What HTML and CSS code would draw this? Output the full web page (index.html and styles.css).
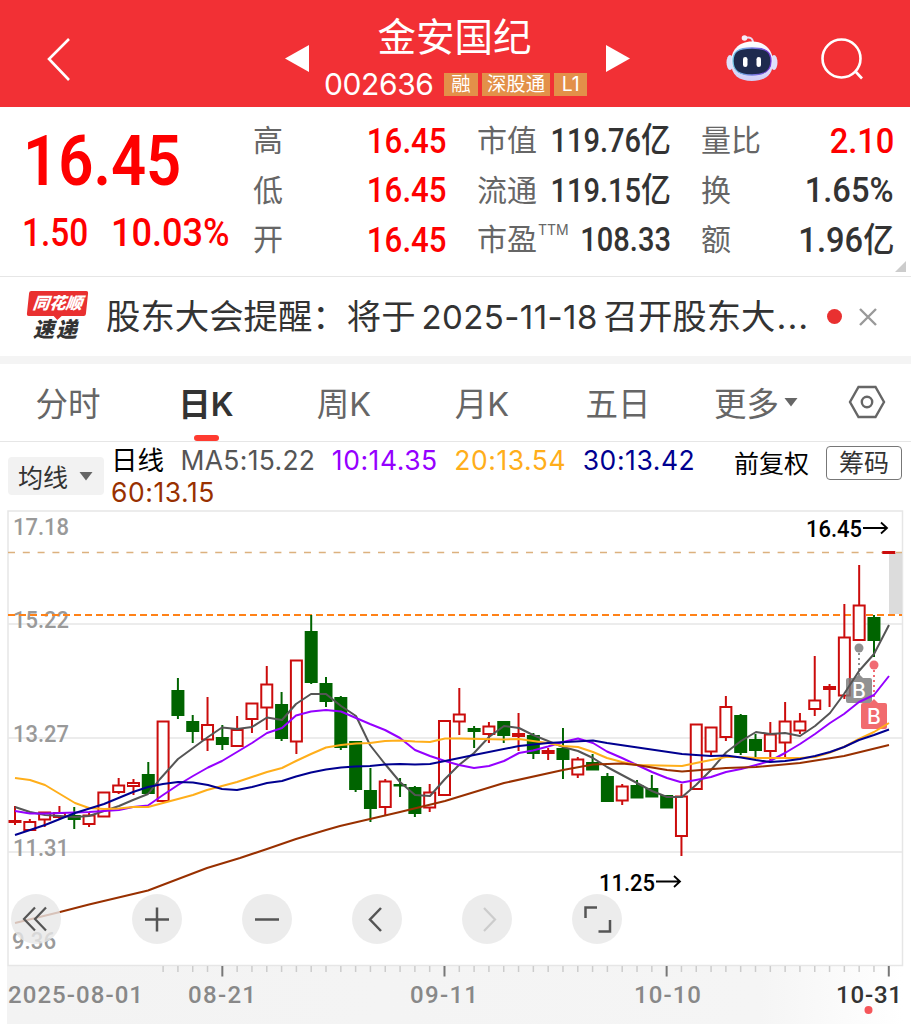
FILE: index.html
```html
<!DOCTYPE html>
<html lang="zh-CN">

<head>
    <meta charset="UTF-8">
    <meta name="viewport" content="width=device-width, initial-scale=1.0">
    <title>金安国纪 002636</title>
    <link rel="stylesheet" href="styles.css">
</head>

<body>

    <header class="header">
        <svg class="back" width="26" height="44" viewBox="0 0 26 44"><path d="M23 2 3 22 23 43" /></svg>
        <svg class="prev" width="24" height="28" viewBox="0 0 24 28"><path d="M24 0v27L0 13.500z" /></svg>
        <div class="stock">
            <h1>金安国纪</h1>
            <div class="stock-info">
                <span class="code">002636</span>
                <span class="tag">融</span>
                <span class="tag">深股通</span>
                <span class="tag">L1</span>
            </div>
        </div>
        <svg class="next" width="24" height="28" viewBox="0 0 24 28"><path d="M0 0v27l24-13.500z" /></svg>
        <svg class="robot" width="54" height="50" viewBox="0 0 54 50">
            <defs>
                <linearGradient id="shell" x1="0" y1="0" x2="0" y2="1">
                    <stop offset="0" stop-color="#fff" />
                    <stop offset="1" stop-color="#cfcdf6" />
                </linearGradient>
                <linearGradient id="rim" x1="0" y1="0" x2="1" y2="0">
                    <stop offset="0" stop-color="#72c8e8" />
                    <stop offset="1" stop-color="#7a37d8" />
                </linearGradient>
            </defs>
            <path d="M21 5q8-2 8 5" fill="none" stroke="#e6dcf5" stroke-width="2" />
            <circle cx="20.500" cy="5" r="2.800" fill="#f5edfa" />
            <ellipse cx="6" cy="29.500" rx="3.500" ry="7.500" fill="#dfe0fb" />
            <ellipse cx="50" cy="29.500" rx="3.500" ry="7.500" fill="#dfe0fb" />
            <path d="M28 8.500C42 8.500 49 18 49 29c0 13-8 19-21 19S7 42 7 29C7 18 14 8.500 28 8.500z" fill="url(#shell)" />
            <path d="M28 15C42 15 47 18.500 47 28c0 10-6 14-19 14S9 38 9 28c0-9.500 5-13 19-13z" fill="#1e2a4e" stroke="url(#rim)" stroke-width="1.300" />
            <rect x="19" y="24" width="4.500" height="10" rx="2.200" fill="#fff" />
            <rect x="32.500" y="24" width="4.500" height="10" rx="2.200" fill="#fff" />
        </svg>
        <svg class="search" width="44" height="44" viewBox="0 0 44 44"><circle cx="20.500" cy="20.500" r="19" /><path d="M34 33l7 7.500" /></svg>
    </header>

    <section class="quote">
        <div class="price">
            <div class="last"><span class="num">16.45</span></div>
            <div class="change"><span class="num">1.50</span><span class="num percent">10.03%</span></div>
        </div>
        <dl class="stats high">
            <dt>高</dt><dd class="red"><span class="num">16.45</span></dd>
            <dt>低</dt><dd class="red"><span class="num">16.45</span></dd>
            <dt>开</dt><dd class="red"><span class="num">16.45</span></dd>
        </dl>
        <dl class="stats value">
            <dt>市值</dt><dd><span class="num">119.76<i>亿</i></span></dd>
            <dt>流通</dt><dd><span class="num">119.15<i>亿</i></span></dd>
            <dt>市盈<sup>TTM</sup></dt><dd><span class="num">108.33</span></dd>
        </dl>
        <dl class="stats ratio">
            <dt>量比</dt><dd class="red"><span class="num">2.10</span></dd>
            <dt>换</dt><dd><span class="num">1.65%</span></dd>
            <dt>额</dt><dd><span class="num">1.96<i>亿</i></span></dd>
        </dl>
        <span class="corner"></span>
    </section>

    <section class="news">
        <div class="news-logo">
            <span class="logo-top">同花顺</span>
            <span class="logo-bottom">速递</span>
        </div>
        <p class="news-text">股东大会提醒：将于<span class="date">2025-11-18</span>召开股东大<span class="dots">...</span></p>
        <span class="dot"></span>
        <svg class="close" width="18" height="18" viewBox="0 0 18 18"><path d="M1 1l16 16M17 1 1 17" /></svg>
    </section>

    <nav class="tabs">
        <a>分时</a>
        <a class="active">日K</a>
        <a>周K</a>
        <a>月K</a>
        <a class="five">五日</a>
        <a class="more">更多<svg width="14" height="10" viewBox="0 0 14 10"><path d="M.5 1h13L7 9.500z" /></svg></a>
        <a><svg class="setting" width="38" height="34" viewBox="0 0 38 34"><path d="M10.500 2h17L36 17l-8.500 15h-17L2 17z" /><circle cx="19" cy="17" r="5.200" /></svg></a>
    </nav>

    <section class="average">
        <button class="average-btn">均线<svg width="14" height="10" viewBox="0 0 14 10"><path d="M.5 1h13L7 9.500z" /></svg></button>
        <div class="average-list">
            <span class="day">日线</span>
            <span class="ma5">MA5:15.22</span>
            <span class="ma10">10:14.35</span>
            <span class="ma20">20:13.54</span>
            <span class="ma30">30:13.42</span>
            <span class="ma60">60:13.15</span>
        </div>
        <span class="adjust">前复权</span>
        <button class="chips">筹码</button>
    </section>

    <main class="chart">
        <svg class="kline" width="911" height="514" viewBox="0 510 911 514">
            <defs>
                <linearGradient id="axis-bg" x1="0" y1="0" x2="1" y2="0">
                    <stop offset="0" stop-color="#f3f3f3" />
                    <stop offset=".84" stop-color="#f5f5f5" />
                    <stop offset="1" stop-color="#fff" />
                </linearGradient>
            </defs>
            <rect x="7" y="966" width="896" height="58" fill="url(#axis-bg)" />
            <g class="grid">
                <rect x="8" y="511" width="894.500" height="454.500" />
                <path d="M8 624h894M8 738h894M8 852h894" />
            </g>
            <g class="scale">
                <text x="13" y="534.500" textLength="56" lengthAdjust="spacingAndGlyphs">17.18</text>
                <text x="13" y="627.500" textLength="56" lengthAdjust="spacingAndGlyphs">15.22</text>
                <text x="13" y="741.500" textLength="56" lengthAdjust="spacingAndGlyphs">13.27</text>
                <text x="13" y="855.500" textLength="56" lengthAdjust="spacingAndGlyphs">11.31</text>
                <text x="12" y="948.500" textLength="44" lengthAdjust="spacingAndGlyphs">9.36</text>
            </g>
            <rect x="889" y="553" width="13" height="61" fill="#dcdcdc" />
            <path class="limit-line" d="M8 552.500h894" />
            <path class="cost-line" d="M8 615h894" />
            <g id="candles"></g>
            <g id="marks">
                <circle cx="859" cy="648" r="4.500" fill="#777" />
                <path d="M859 653v24" stroke="#777" />
                <rect x="846" y="678" width="26" height="25" rx="2" fill="#7b7b7b" />
                <path d="M855 678l4-4 4 4z" fill="#777" stroke="none" />
                <text x="859" y="698">B</text>
                <circle cx="874" cy="665" r="4.500" fill="#ef4b55" />
                <path d="M874 670v31" stroke="#ef4b55" />
                <rect x="861" y="703" width="26" height="26" rx="2" fill="#ef4b4f" />
                <path d="M870 703l4-4 4 4z" fill="#ef4b4f" stroke="none" />
                <text x="874" y="724">B</text>
            </g>
            <g id="lines"></g>
            <g class="peak">
                <text x="806" y="537" textLength="56" lengthAdjust="spacingAndGlyphs">16.45</text>
                <path d="M863 528h24M881 522.500l6 5.500-6 5.500" />
                <text x="599" y="890.500" textLength="56" lengthAdjust="spacingAndGlyphs">11.25</text>
                <path d="M656 881.500h24M674 876l6 5.500-6 5.500" />
            </g>
            <g id="ticks"></g>
            <g class="dates">
                <text x="8" y="1003" textLength="135">2025-08-01</text>
                <text x="188" y="1003" textLength="68">08-21</text>
                <text x="410" y="1003" textLength="68">09-11</text>
                <text x="634" y="1003" textLength="67">10-10</text>
                <text class="today" x="836" y="1003" textLength="66">10-31</text>
            </g>
            <circle cx="868.500" cy="1010" r="4" fill="#f5565a" />
        </svg>

        <div class="tools">
            <button class="first"><svg viewBox="0 0 50 50"><path d="M24 13.500 13 25l11 11.500M35 13.500 24 25l11 11.500" /></svg></button>
            <button><svg viewBox="0 0 50 50"><path class="thick" d="M13 25.500h24M25 13.500v24" /></svg></button>
            <button><svg viewBox="0 0 50 50"><path class="thick" d="M13 25.500h24" /></svg></button>
            <button><svg viewBox="0 0 50 50"><path class="thick" d="M29 14 18 25.500 29 37" /></svg></button>
            <button><svg viewBox="0 0 50 50"><path class="off" d="M22 14l11 11.500L22 37" /></svg></button>
            <button><svg viewBox="0 0 50 50"><path class="thick" d="M25 13.500H13.500V24M38 26v11.500H26.500" /></svg></button>
        </div>
    </main>

    <script src="script.js"></script>
</body>

</html>
```
FILE: styles.css
```css
* {
    box-sizing: border-box;
}

body,
h1,
p,
dl,
dt,
dd {
    margin: 0;
    padding: 0;
    font-weight: 400;
}

body {
    width: 911px;
    height: 1024px;
    overflow: hidden;
    background-color: #fff;
    color: #333;
    font-family: Inter, "Noto Sans CJK SC", sans-serif;
}

button {
    border: none;
    padding: 0;
    font-family: inherit;
    color: inherit;
}

svg {
    display: block;
    flex-shrink: 0;
}

/* narrow digits */
.num {
    display: inline-block;
    font-family: Roboto, "Noto Sans CJK SC", sans-serif;
    font-weight: 500;
    white-space: nowrap;
    transform: scaleX(.88);
    transform-origin: right center;
}

.red {
    color: #fe0000;
}

/* header */
.header {
    display: flex;
    align-items: flex-start;
    height: 107px;
    margin-right: 1px;
    padding-left: 46px;
    background-color: #f23035;
    color: #fff;
}

.header svg {
    fill: #fff;
}

.header .back,
.header .search {
    fill: none;
    stroke: #fff;
    stroke-width: 2.6;
}

.back {
    margin-top: 37px;
}

.prev {
    margin: 45px 0 0 213px;
}

.stock {
    width: 297px;
    text-align: center;
}

.stock h1 {
    height: 70px;
    padding-top: 2px;
    padding-right: 6px;
    font-size: 38.5px;
    line-height: 70px;
}

.stock-info {
    display: flex;
    align-items: center;
    height: 28px;
    gap: 4px;
    padding-left: 15px;
}

.code {
    width: 116px;
    text-align: left;
    font-size: 30px;
    letter-spacing: -.4px;
}

.tag {
    height: 23px;
    padding: 0 5px;
    background-color: #e39049;
    font-size: 19.4px;
    line-height: 22px;
}

.tag:nth-child(2) {
    padding: 0 7.3px;
}

.tag:last-child {
    padding: 0 7.5px;
}

.next {
    margin: 45px 0 0 0;
}

.robot {
    margin: 33px 0 0 94px;
}

.search {
    margin: 38px 0 0 43px;
}

/* quote */
.quote {
    position: relative;
    display: flex;
    height: 170px;
    padding-top: 9px;
    border-bottom: 1px solid #e6e6e6;
}

.price {
    width: 254px;
    color: #fe0000;
}

.price .num {
    transform-origin: left center;
}

.last {
    height: 88px;
    padding-left: 23px;
    font-size: 70px;
    line-height: 88px;
}

.last .num {
    font-weight: 600;
}

.change {
    display: flex;
    padding-left: 22px;
    font-size: 38px;
    line-height: 58px;
}

.change .percent {
    margin-left: 14px;
    transform: scaleX(.95);
}

.stats {
    display: grid;
    grid-template-columns: auto minmax(0, 1fr);
    grid-auto-rows: 49.5px;
    align-items: center;
    width: 193px;
    margin-right: 31px;
    line-height: 49px;
}

.stats dt {
    margin-left: -1px;
    font-size: 30px;
    color: #666;
    white-space: nowrap;
}

.stats dd {
    justify-self: end;
    font-size: 35.5px;
    white-space: nowrap;
}

.stats i {
    font-size: 34px;
    font-style: normal;
}

.value dd {
    font-size: 33px;
}

.stats sup {
    position: relative;
    top: -4px;
    margin-left: 1px;
    font-size: 14px;
    line-height: 0;
}

.ratio {
    width: 192px;
    margin-right: 0;
}

.ratio .num {
    transform: scaleX(.92);
}

.corner {
    position: absolute;
    right: 5px;
    bottom: 4px;
    border-left: 11px solid transparent;
    border-bottom: 11px solid #ccc;
}

/* news */
.news {
    display: flex;
    align-items: center;
    height: 79px;
    padding-left: 27px;
}

.news-logo {
    display: flex;
    flex-direction: column;
    align-items: center;
    width: 62px;
    height: 52px;
    font-style: italic;
    font-weight: 900;
}

.logo-top {
    position: relative;
    width: 59px;
    height: 26px;
    margin-right: 1px;
    border-radius: 2px;
    background-color: #e93030;
    color: #fff;
    font-size: 16.5px;
    line-height: 25px;
    text-align: center;
    transform: skewX(-6deg);
}

.logo-top::after {
    content: "";
    position: absolute;
    left: 27px;
    top: 25px;
    border: 4px solid transparent;
    border-top-color: #e93030;
}

.logo-bottom {
    margin-right: 4px;
    font-size: 21px;
    line-height: 28px;
    letter-spacing: 2px;
}

.news-text {
    width: 721px;
    margin-left: 17px;
    font-size: 34.4px;
    line-height: 60px;
    white-space: nowrap;
}

.date {
    display: inline-block;
    width: 188px;
    padding-left: 6px;
    font-size: 33px;
    letter-spacing: .4px;
}

.dots {
    margin-left: 1px;
    letter-spacing: 1px;
}

.dot {
    width: 15px;
    height: 15px;
    border-radius: 50%;
    background-color: #e93030;
}

.close {
    margin-left: 17px;
    stroke: #999;
    stroke-width: 2.4;
}

/* tabs */
.tabs {
    display: grid;
    grid-template-columns: repeat(5, 138px) 134px 87px;
    height: 86px;
    border-top: 8px solid #f4f4f4;
    border-bottom: 1px solid #e6e6e6;
    font-size: 32.5px;
    color: #666;
}

.tabs a {
    position: relative;
    display: flex;
    align-items: center;
    justify-content: center;
    padding-bottom: 2px;
    right: 1px;
}

.tabs .active {
    color: #333;
    font-weight: 600;
}

.active::after {
    content: "";
    position: absolute;
    bottom: 0;
    width: 25px;
    height: 6px;
    border-radius: 3px;
    background-color: #ff3b30;
}

.tabs .five {
    right: 3px;
}

.more svg {
    margin-left: 5px;
    fill: #666;
}

.setting {
    fill: none;
    stroke: #666;
    stroke-width: 2.4;
}

/* moving average */
.average {
    display: flex;
    align-items: flex-start;
    height: 68px;
    padding-left: 8px;
}

.average-btn {
    display: flex;
    align-items: center;
    width: 96px;
    height: 38px;
    margin-top: 15px;
    padding-left: 10px;
    border-radius: 4px;
    background-color: #f2f2f2;
    font-size: 25px;
}

.average-btn svg {
    margin-left: 11px;
    fill: #666;
}

.average-list {
    display: flex;
    flex-wrap: wrap;
    flex-shrink: 0;
    column-gap: 16.5px;
    width: 630px;
    padding: 3px 0 0 7px;
    font-size: 26.5px;
    line-height: 31.5px;
    letter-spacing: .55px;
    white-space: nowrap;
}

.day {
    color: #000;
    letter-spacing: 0;
}

.ma5 {
    color: #555;
    letter-spacing: .3px;
}

.ma10 {
    color: #9500ff;
}

.ma20 {
    color: #ffae1a;
}

.ma30 {
    color: #000090;
}

.ma60 {
    color: #983000;
}

.adjust {
    width: 92px;
    padding-top: 5px;
    font-size: 25px;
    line-height: 34px;
    color: #000;
}

.chips {
    width: 76px;
    height: 34px;
    margin-top: 4px;
    border: 1.5px solid #777;
    border-radius: 4px;
    background-color: #fff;
    font-size: 25px;
    line-height: 30px;
}

.average button,
.adjust {
    flex-shrink: 0;
}

/* chart */
.chart {
    position: relative;
    height: 514px;
}

.grid {
    fill: none;
    stroke: #e6e6e6;
    stroke-width: 1.5;
}

.chart text {
    font-family: Roboto, sans-serif;
    font-weight: 500;
}

.scale text {
    fill: #999;
    font-size: 24px;
}

.limit-line {
    stroke: #dcb17e;
    stroke-width: 1.3;
    stroke-dasharray: 7 7.8;
}

.cost-line {
    stroke: #ff8218;
    stroke-width: 2.2;
    stroke-dasharray: 7 4;
}

.up {
    fill: #fff;
    stroke: #cb0c0c;
    stroke-width: 2;
}

.down {
    fill: #006400;
    stroke: #006400;
    stroke-width: 2;
}

#lines polyline {
    fill: none;
    stroke-width: 2;
    stroke-linejoin: round;
}

#marks {
    opacity: .82;
}

#marks path {
    stroke-width: 2;
    stroke-dasharray: 2 3;
}

#marks text {
    fill: #fff;
    font-family: Inter, sans-serif;
    font-size: 21px;
    text-anchor: middle;
}

.peak text {
    fill: #000;
    font-size: 24px;
}

.peak path {
    fill: none;
    stroke: #000;
    stroke-width: 1.8;
}

.dates text {
    fill: #888;
    font-size: 24px;
}

.dates .today {
    fill: #333;
}

/* buttons over the chart */
.tools {
    position: absolute;
    left: 11px;
    top: 384px;
    display: flex;
    gap: 60px;
}

.tools button {
    width: 50px;
    height: 50px;
    border-radius: 50%;
    background-color: rgba(231, 231, 231, .8);
}

.tools .first {
    margin-right: 11px;
}

.tools path {
    fill: none;
    stroke: #555;
    stroke-width: 2.2;
}

.tools .thick {
    stroke-width: 2.5;
}

.tools .off {
    stroke: #ccc;
}
```
FILE: script.js
```js
const svgNs = "http://www.w3.org/2000/svg";
const startX = 15;
const stepX = 14.81;

// [up or down, high, body top, body bottom, low]
const candles = [
    ["up", 806, 821, 822, 825], ["up", 819, 822, 830, 830], ["up", 812, 812.5, 819.5, 827],
    ["up", 806, 813, 817, 819], ["down", 807, 816, 819, 829], ["up", 812, 815.5, 824, 827],
    ["up", 792, 792.5, 816.5, 817], ["up", 778, 785.5, 792, 794], ["up", 779, 783, 786, 795],
    ["down", 762, 775, 793, 794], ["up", 721, 721.5, 801, 801], ["down", 678, 691, 715, 719],
    ["down", 715, 722, 731, 743], ["up", 697, 725, 739.5, 751], ["down", 725, 738, 744, 750],
    ["up", 716, 730, 746, 747], ["up", 703, 703.5, 719, 733], ["up", 666, 684.5, 707.5, 730],
    ["down", 692, 705, 738, 741], ["up", 660, 660.5, 741.5, 754], ["down", 615, 632, 682, 684],
    ["down", 677, 684, 701, 707], ["down", 696, 698, 747, 750], ["down", 741, 742, 789, 792],
    ["down", 768, 791, 808, 822], ["up", 779, 781.5, 807, 815], ["down", 778, 785, 785.5, 797],
    ["down", 786, 788, 813, 817], ["up", 784, 792.5, 807.5, 812], ["up", 721, 721, 795, 795],
    ["up", 688, 714.5, 721.5, 735], ["down", 726, 729, 731, 748], ["up", 722, 726.5, 734, 743],
    ["down", 721, 722, 735, 743], ["up", 713, 734, 736, 751], ["down", 733, 736, 753, 759],
    ["up", 748, 751, 753, 760], ["down", 728, 749, 759, 779], ["up", 757, 759.5, 774.5, 778],
    ["down", 754, 763, 769.5, 770], ["down", 773, 777, 801, 802], ["up", 784, 786.5, 800.5, 805],
    ["down", 780, 786, 797.5, 798], ["down", 775, 789, 796.5, 797], ["down", 795, 796, 807.5, 808],
    ["up", 784, 796.5, 836, 856], ["up", 724, 724.5, 789, 789], ["up", 727, 727.5, 751.5, 756],
    ["up", 696, 707, 737, 741], ["down", 714, 716, 752, 755], ["down", 734, 740, 750, 758],
    ["up", 722, 734.5, 751, 763], ["up", 702, 721.5, 742.5, 757], ["up", 713, 721.5, 730.5, 734],
    ["up", 656, 700.5, 709, 716], ["up", 684, 687, 689, 707], ["up", 604, 637.5, 695.5, 699],
    ["up", 565, 605.5, 640, 640], ["down", 615, 618, 640, 657], ["up", 552, 552, 553, 553]
];

const lines = [
    { color: "#555", points: "15,807 30,812 45,815 60,816 75,817 89,816 104,811 119,806 133,800 148,794 160,779 178,759 193,748 208,737 222,727.5 237,729 252,727 267,717.5 282,720 296,704 311,694 326,694 341,706 356,716 370,745 385,764 400,782 415,795 430,796 445,779 459,765 474,753 489,737 504,726 519,728 533,735 548,741 563,747 578,751 593,758 607,767 622,775 637,783 652,791 667,797 682,797 696,785 711,770 726,752.5 741,741 756,732 770,734 785,733 800,736 815,726 830,713 844,694 859,671 874,654 889,625" },
    { color: "#9500ff", points: "15,811 30,813.5 45,813.5 60,813 75,812.5 89,812 104,811 119,810 133,807 148,805.5 163,795 178,785 193,776 208,767.5 222,761 237,752 252,743 267,733 282,728 296,715.5 311,711.5 326,710 341,711.5 356,718 370,724 385,730 400,738 415,750 430,756 445,761 459,765 474,768 489,766 504,761 519,753 533,750.5 548,746.5 563,742 578,738.5 593,743 607,751.5 622,758 637,765 652,772 667,778 682,782.5 696,780 711,777 726,772 741,769 756,765 770,761 785,753 800,744 815,734 830,723 844,714 859,702 874,695 889,676" },
    { color: "#ffae1a", points: "15,778 30,780 45,785 60,794 75,803 89,808 104,809 119,808.5 133,807 148,807 163,803 178,799 193,795 207,790 222,786 237,782 252,777 267,772 282,768 296,761 311,754 326,747.5 341,745 356,743.5 370,743 385,741 400,740.5 415,741.5 430,742 445,738.5 459,738.5 504,739.5 519,739 533,741 548,743 563,746 578,747 593,752 607,758 622,762 637,765 682,766 696,763 711,760 726,757 741,757 756,758 770,758 800,758 815,757 830,752.5 844,747 859,739 874,732 889,723" },
    { color: "#000090", points: "15,835 30,830 45,825 75,813 104,804 133,792 148,787 163,784 178,782 193,782.5 208,785 222,789 237,790 252,787 267,783 282,781 296,776.5 311,772.5 326,769.5 341,767.5 355,766.5 370,766 385,764.5 400,764 415,764.5 430,764 445,761 474,755 519,746 548,743 593,740.5 607,743 682,754 696,755 711,756 726,755.5 741,757.5 756,760 770,762 785,761 800,759 815,756 830,752 844,747 859,740 874,735 889,729.5" },
    { color: "#983000", points: "15,923 60,912 89,904.5 148,890.5 207,868 240,858 267,849 296,839 326,830 340,826 370,819 400,812 445,801 504,783 563,770 593,764.5 622,763.5 637,765 667,770 682,771.5 726,768 756,767 800,763 844,756 889,745" }
];

const draw = (parent, name, attrs) => {
    const el = document.createElementNS(svgNs, name);
    Object.keys(attrs).forEach((key) => el.setAttribute(key, attrs[key]));
    document.querySelector(parent).append(el);
};

candles.forEach(([type, high, top, bottom, low], i) => {
    const x = startX + i * stepX;
    draw("#candles", "path", { class: type, d: `M${x} ${high}V${low}` });
    draw("#candles", "rect", { class: type, x: x - 5.5, y: top, width: 11, height: bottom - top });
});

lines.forEach((line) => {
    draw("#lines", "polyline", { points: line.points, stroke: line.color });
});

// one tick for each trading day, a long one every 15 days
for (let i = 10; i < 60; i++) {
    const x = startX + i * stepX;
    const long = i % 15 === 14;
    draw("#ticks", "path", {
        d: `M${x} 966V${long ? 976.5 : 972}`,
        stroke: long ? "#777" : "#ccc",
        "stroke-width": long ? 2 : 1.5
    });
}
```
